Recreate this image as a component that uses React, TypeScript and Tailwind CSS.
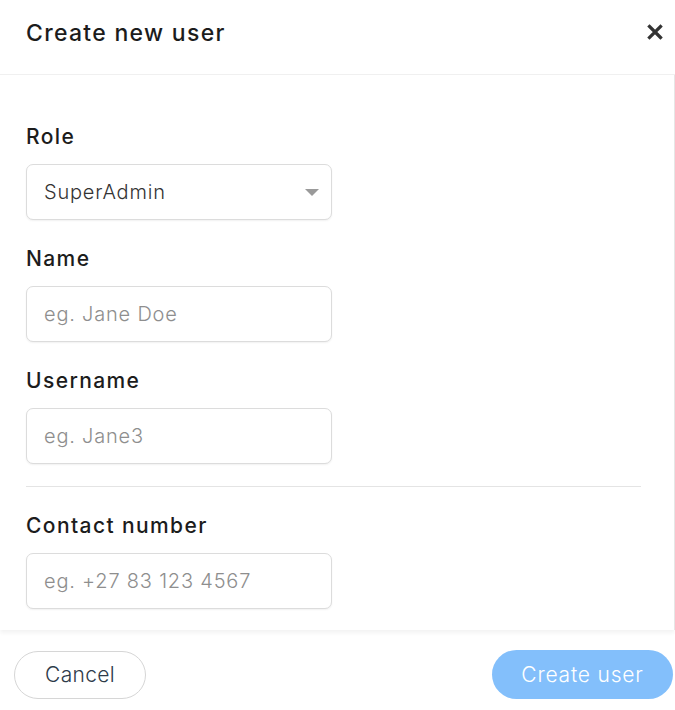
import React from "react";

const font = { fontFamily: "Inter, 'Open Sans', sans-serif" };

const Label = ({ children }: { children: React.ReactNode }) => (
  <label className="text-[21px] font-medium leading-[24px] tracking-[1.4px] text-[#1c1c1c]">{children}</label>
);

const inputBox =
  "mt-[15px] h-[56px] w-[306px] rounded-[7px] border border-[#dcdcdc] bg-white px-[17px] text-[20px] font-light tracking-[0.8px] shadow-[0_1px_2px_rgba(0,0,0,0.06)]";

const Field = ({ label, placeholder }: { label: string; placeholder: string }) => (
  <div className="flex flex-col">
    <Label>{label}</Label>
    <input
      placeholder={placeholder}
      className={inputBox + " text-[#333] outline-none placeholder:text-[#8e8e8e]"}
    />
  </div>
);

export default function App() {
  return (
    <div className="flex h-[710px] w-[675px] flex-col bg-white" style={font}>
      {/* header */}
      <div className="flex h-[75px] shrink-0 items-start justify-between border-b border-[#f0f0f0] pl-[26px] pr-[5px] pt-[17px]">
        <h2 className="mt-[2px] text-[23px] font-medium leading-[28px] tracking-[1.3px] text-[#1c1c1c]">Create new user</h2>
        <button className="flex h-[30px] w-[30px] items-center justify-center text-[#333]">
          <svg width="16" height="16" viewBox="0 0 16 16">
            <path d="M2.5 2.5 L13.5 13.5 M13.5 2.5 L2.5 13.5" stroke="currentColor" strokeWidth="3.2" strokeLinecap="square" />
          </svg>
        </button>
      </div>

      {/* body */}
      <div className="flex h-[555px] shrink-0 flex-col gap-[27px] border-r border-[#e6e6e6] pl-[26px] pr-[33px] pt-[50px] shadow-[0_3px_4px_rgba(0,0,0,0.05)]">
        <div className="flex flex-col">
          <Label>Role</Label>
          <div className={inputBox + " relative flex items-center"}>
            <span className="text-[#333]">SuperAdmin</span>
            <svg className="absolute right-[12px] top-[24px]" width="14" height="8" viewBox="0 0 14 8">
              <path d="M0 0 H14 L7 7 Z" fill="#9a9a9a" />
            </svg>
          </div>
        </div>
        <Field label="Name" placeholder="eg. Jane Doe" />
        <div className="flex flex-col">
          <Field label="Username" placeholder="eg. Jane3" />
          <div className="mt-[22px] border-t border-[#e4e4e4]" />
        </div>
        <Field label="Contact number" placeholder="eg. +27 83 123 4567" />
      </div>

      {/* footer */}
      <div className="flex flex-1 items-start justify-between pl-[14px] pr-[2px] pt-[21px]">
        <button className="h-[48px] w-[132px] rounded-full border border-[#d6d6d6] bg-white text-[21px] font-light tracking-[0.3px] text-[#2e3b4a]">
          Cancel
        </button>
        <button className="h-[49px] w-[181px] -translate-y-[1px] rounded-full bg-[#83bffb] text-[21px] font-light tracking-[0.8px] text-white">
          Create user
        </button>
      </div>
    </div>
  );
}
